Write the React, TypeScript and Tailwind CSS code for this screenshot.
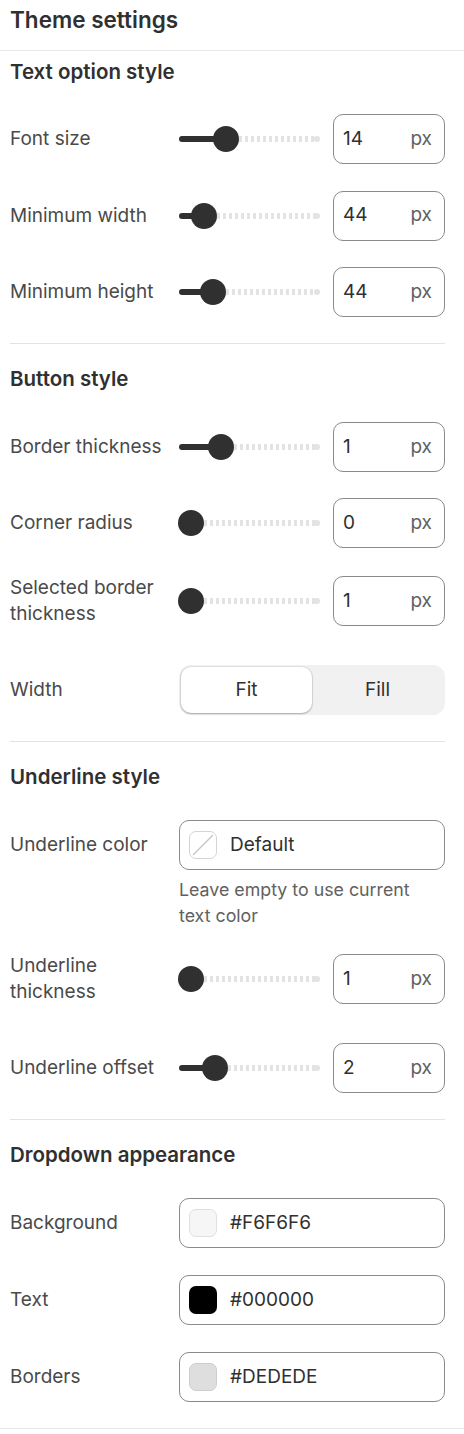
import React from "react";

const FONT = "font-['Inter','Noto_Sans',sans-serif]";

function Slider({ pos }: { pos: number }) {
  // pos: thumb center offset from slider left (px)
  return (
    <div className="relative h-[26px] w-[141px] shrink-0">
      <div
        className="absolute left-0 top-[10px] h-[6px] rounded-full bg-[#303030]"
        style={{ width: pos }}
      />
      <div
        className="absolute right-[2px] top-[10px] h-[6px] bg-[repeating-linear-gradient(90deg,#e3e3e3_0_3px,transparent_3px_6px)]"
        style={{ left: pos + 13 }}
      />
      <div className="absolute right-0 top-[10px] h-[6px] w-[6px] rounded-full bg-[#e3e3e3]" />
      <div
        className="absolute top-0 h-[26px] w-[26px] rounded-full bg-[#303030]"
        style={{ left: pos - 13 }}
      />
    </div>
  );
}

function PxInput({ value }: { value: string }) {
  return (
    <div className="flex h-[50px] w-[112px] shrink-0 items-center justify-between rounded-[10px] border border-[#8a8a8a] bg-white pl-[9px] pr-[12px]">
      <span className="text-[19px] text-[#303030]">{value}</span>
      <span className="text-[19px] text-[#616161]">px</span>
    </div>
  );
}

function Label({ children }: { children: React.ReactNode }) {
  return <div className="text-[19px] leading-[26px] text-[#4a4a4a]">{children}</div>;
}

function SliderRow({ label, pos, value, className = "" }: { label: string; pos: number; value: string; className?: string }) {
  return (
    <div className={`grid grid-cols-[157px_1fr] items-center gap-x-[12px] ${className}`}>
      <Label>{label}</Label>
      <div className="flex items-center justify-between">
        <Slider pos={pos} />
        <PxInput value={value} />
      </div>
    </div>
  );
}

function ColorRow({ label, swatch, text, className = "" }: { label: string; swatch: React.ReactNode; text: string; className?: string }) {
  return (
    <div className={`grid grid-cols-[157px_1fr] items-center gap-x-[12px] ${className}`}>
      <Label>{label}</Label>
      <div className="flex h-[50px] items-center gap-[13px] rounded-[10px] border border-[#8a8a8a] bg-white pl-[9px]">
        {swatch}
        <span className="text-[19px] text-[#303030]">{text}</span>
      </div>
    </div>
  );
}

function Heading({ children }: { children: React.ReactNode }) {
  return <h2 className="text-[20.5px] font-semibold leading-[24px] text-[#303030]">{children}</h2>;
}

export default function App() {
  return (
    <div className={`w-[464px] bg-white ${FONT}`}>
      <div className="h-[51px] border-b border-[#e8e8e8] px-[10px] pt-[6px]">
        <h1 className="text-[22.5px] font-semibold leading-[28px] text-[#303030]">Theme settings</h1>
      </div>

      <div className="pl-[10px] pr-[19px]">
        {/* Text option style */}
        <section className="border-b border-[#e3e3e3] pt-[9px] pb-[26px]">
          <Heading>Text option style</Heading>
          <div className="mt-[30px] flex flex-col gap-[26.5px]">
            <SliderRow label="Font size" pos={47} value="14" />
            <SliderRow label="Minimum width" pos={25} value="44" />
            <SliderRow label="Minimum height" pos={34} value="44" />
          </div>
        </section>

        {/* Button style */}
        <section className="border-b border-[#e3e3e3] pt-[23px] pb-[26px]">
          <Heading>Button style</Heading>
          <div className="mt-[31px] flex flex-col">
            <SliderRow label="Border thickness" pos={42} value="1" />
            <SliderRow label="Corner radius" pos={12} value="0" className="mt-[26px]" />
            <SliderRow label="Selected border thickness" pos={12} value="1" className="mt-[27px]" />
            <div className="mt-[38px] grid grid-cols-[157px_1fr] items-center gap-x-[12px]">
              <Label>Width</Label>
              <div className="grid h-[50px] grid-cols-2 rounded-[12px] bg-[#f1f1f1] p-[2px]">
                <div className="flex items-center justify-center rounded-[10px] bg-white text-[19px] text-[#303030] shadow-[0_1px_2px_rgba(0,0,0,0.25),0_0_0_1px_rgba(0,0,0,0.06)]">
                  Fit
                </div>
                <div className="flex items-center justify-center text-[19px] text-[#303030]">Fill</div>
              </div>
            </div>
          </div>
        </section>

        {/* Underline style */}
        <section className="border-b border-[#e3e3e3] pt-[23px] pb-[26px]">
          <Heading>Underline style</Heading>
          <div className="mt-[31px] flex flex-col">
            <ColorRow
              label="Underline color"
              text="Default"
              swatch={
                <svg width="28" height="28" viewBox="0 0 28 28" className="shrink-0">
                  <rect x="0.5" y="0.5" width="27" height="27" rx="6.5" fill="#fff" stroke="#d4d4d4" />
                  <line x1="4" y1="24" x2="24" y2="4" stroke="#c4c4c4" strokeWidth="1.3" />
                </svg>
              }
            />
            <div className="grid grid-cols-[157px_1fr] gap-x-[12px]">
              <div />
              <p className="mt-[7px] text-[17.8px] leading-[26px] text-[#616161]">Leave empty to use current text color</p>
            </div>
            <SliderRow label="Underline thickness" pos={12} value="1" className="mt-[24px]" />
            <SliderRow label="Underline offset" pos={36} value="2" className="mt-[38px]" />
          </div>
        </section>
      </div>

      {/* Dropdown appearance */}
      <div className="border-b border-[#e8e8e8] pl-[10px] pr-[19px]">
        <section className="pt-[23px] pb-[26px]">
          <Heading>Dropdown appearance</Heading>
          <div className="mt-[31px] flex flex-col gap-[27px]">
            <ColorRow
              label="Background"
              text="#F6F6F6"
              swatch={<div className="h-[28px] w-[28px] shrink-0 rounded-[7px] border border-[#e0e0e0] bg-[#f6f6f6]" />}
            />
            <ColorRow
              label="Text"
              text="#000000"
              swatch={<div className="h-[28px] w-[28px] shrink-0 rounded-[7px] bg-black" />}
            />
            <ColorRow
              label="Borders"
              text="#DEDEDE"
              swatch={<div className="h-[28px] w-[28px] shrink-0 rounded-[7px] border border-[#cdcdcd] bg-[#dedede]" />}
            />
          </div>
        </section>
      </div>
    </div>
  );
}
